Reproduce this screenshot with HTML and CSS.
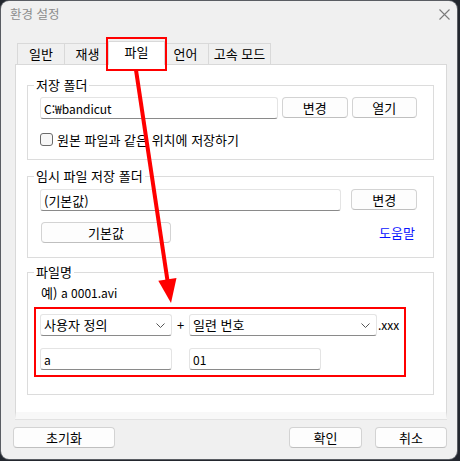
FILE: index.html
```html
<!DOCTYPE html>
<html lang="ko">
<head>
    <meta charset="UTF-8">
    <title>환경 설정</title>
    <link rel="stylesheet" href="styles.css">
</head>
<body>
    <div class="window">
        <div class="titlebar">
            <span class="title">환경 설정</span>
            <svg class="close" width="11" height="11" viewBox="0 0 11 11">
                <path d="M0.5 0.5 L10.5 10.5 M10.5 0.5 L0.5 10.5" stroke="#7a7a7a" stroke-width="1.1" fill="none"/>
            </svg>
        </div>

        <div class="tabs">
            <div class="tab tab-general">일반</div>
            <div class="tab tab-play">재생</div>
            <div class="tab tab-file active">파일</div>
            <div class="tab tab-lang">언어</div>
            <div class="tab tab-fast">고속 모드</div>
        </div>

        <div class="page">
            <fieldset class="group group-save">
                <legend>저장 폴더</legend>
                <div class="row">
                    <input class="field field-path latin" type="text" value="C:₩bandicut">
                    <button class="btn btn-small">변경</button>
                    <button class="btn btn-small">열기</button>
                </div>
                <label class="check-row">
                    <span class="checkbox"></span>
                    원본 파일과 같은 위치에 저장하기
                </label>
            </fieldset>

            <fieldset class="group group-temp">
                <legend>임시 파일 저장 폴더</legend>
                <div class="row row-wide">
                    <input class="field field-temp" type="text" value="(기본값)">
                    <button class="btn btn-small">변경</button>
                </div>
                <div class="row row-default">
                    <button class="btn btn-default">기본값</button>
                    <a class="help-link" href="#">도움말</a>
                </div>
            </fieldset>

            <fieldset class="group group-name">
                <legend>파일명</legend>
                <div class="example">예) <span class="latin">a 0001.avi</span></div>
                <div class="highlight-box">
                    <div class="row">
                        <div class="select select-short">
                            <span>사용자 정의</span>
                            <svg width="9" height="5" viewBox="0 0 9 5"><polyline points="0.5,0.5 4.5,4.5 8.5,0.5" fill="none" stroke="#555" stroke-width="1"/></svg>
                        </div>
                        <span class="plus">+</span>
                        <div class="select select-long">
                            <span>일련 번호</span>
                            <svg width="9" height="5" viewBox="0 0 9 5"><polyline points="0.5,0.5 4.5,4.5 8.5,0.5" fill="none" stroke="#555" stroke-width="1"/></svg>
                        </div>
                        <span class="ext latin">.xxx</span>
                    </div>
                    <div class="row row-inputs">
                        <input class="field field-short latin" type="text" value="a">
                        <span class="plus"></span>
                        <input class="field field-short latin" type="text" value="01">
                    </div>
                </div>
            </fieldset>
        </div>

        <div class="footer">
            <button class="btn btn-reset">초기화</button>
            <button class="btn btn-ok">확인</button>
            <button class="btn btn-cancel">취소</button>
        </div>
    </div>

    <!-- red annotation drawn over the dialog -->
    <svg class="annotation" width="460" height="461" viewBox="0 0 460 461">
        <rect x="107" y="38" width="59" height="32" fill="none" stroke="#ff0000" stroke-width="2"/>
        <line x1="136" y1="70" x2="167.4" y2="280" stroke="#ff0000" stroke-width="4"/>
        <polygon points="171,303 176.5,278 158.3,280.7" fill="#ff0000"/>
    </svg>
</body>
</html>
```

FILE: styles.css
```css
body {
    margin: 0;
    width: 460px;
    height: 461px;
    overflow: hidden;
    position: relative;
    background-color: #23272e;
    font-family: "Noto Sans CJK KR", "Noto Sans", sans-serif;
    font-size: 13px;
    color: #000;
}

.latin {
    font-size: 12px;
}

.window {
    width: 456px;
    height: 458px;
    margin: 1px 0 0 1px;
    background-color: #f0f0f0;
    border-radius: 8px;
    box-shadow: 0 0 0 1px #5a5d63;
    display: flex;
    flex-direction: column;
}

.titlebar {
    height: 26px;
    display: flex;
    align-items: center;
    justify-content: space-between;
    padding: 0 7px 0 9px;
}

.title {
    color: #8c8c8c;
    font-size: 12.5px;
    line-height: 16px;
}

.close {
    display: block;
}

/* tabs */
.tabs {
    display: flex;
    align-items: flex-end;
    height: 23px;
    margin: 14px 0 0 16px;
}

.tab {
    box-sizing: border-box;
    height: 21px;
    border: 1px solid #d9d9d9;
    border-bottom: 0;
    background-color: #f0f0f0;
    text-align: center;
    line-height: 19px;
    margin-right: -1px;
}

.tab-general { width: 48px; }
.tab-play { width: 47px; }
.tab-file { width: 53px; }
.tab-lang { width: 47px; }
.tab-fast { width: 63px; }

.tab.active {
    width: 57px;
    height: 24px;
    margin: 0 -3px -1px -2px;
    background-color: #fff;
    position: relative;
    z-index: 1;
    line-height: 20px;
}

.page {
    box-sizing: border-box;
    width: 432px;
    height: 355px;
    margin-left: 14px;
    padding: 12px 12px 0 11px;
    background-color: #fff;
    border: 1px solid #d9d9d9;
    border-bottom: 7px solid #f8f8f8;
    box-shadow: 0 1px 0 #e2e2e2;
}

/* group boxes */
.group {
    margin: 0;
    min-width: 0;
    border: 1px solid #dcdcdc;
    padding: 4px 13px 12px 12px;
}

.group legend {
    padding: 0 2px;
    margin-left: -6px;
    line-height: 16px;
}

.group-temp {
    margin-top: 8px;
    padding-top: 5px;
    padding-bottom: 14px;
}

.group-name {
    margin-top: 6px;
    padding-top: 5px;
    padding-bottom: 17px;
}

.row {
    display: flex;
    align-items: flex-start;
    height: 22px;
}

.row-default {
    margin-top: 10px;
    align-items: center;
    justify-content: space-between;
    padding-right: 5px;
}

.row-inputs {
    margin-top: 12px;
}

/* inputs */
.field,
.select {
    box-sizing: border-box;
    height: 22px;
    margin: 0;
    padding: 0 3px;
    background-color: #fff;
    border: 1px solid #e4e4e4;
    border-bottom-color: #8a8a8a;
    border-radius: 3px;
    font-family: inherit;
    font-size: 13px;
    color: #000;
    outline: none;
}

.field.latin {
    font-size: 12px;
}

.field-path { width: 240px; margin-right: 3px; }
.field-temp { width: 303px; margin-right: 9px; }
.field-short { width: 132px; }

.select {
    display: flex;
    align-items: center;
    justify-content: space-between;
    padding-right: 6px;
    line-height: 20px;
}

.select svg {
    display: block;
}

.select-short { width: 132px; }
.select-long { width: 188px; }

.plus {
    width: 17px;
    text-align: center;
    line-height: 22px;
}

.ext {
    line-height: 22px;
    padding-left: 1px;
}

/* buttons */
.btn {
    box-sizing: border-box;
    height: 21px;
    padding: 0;
    background-color: #fdfdfd;
    border: 1px solid #d3d3d3;
    border-bottom-color: #bfbfbf;
    border-radius: 4px;
    font-family: inherit;
    font-size: 13px;
    line-height: 19px;
    color: #000;
}

.btn-small {
    width: 66px;
    margin-left: 1px;
    margin-right: 3px;
}

.btn-default {
    width: 130px;
    margin-left: 1px;
}

.help-link {
    color: #0a14ff;
    text-decoration: none;
    line-height: 16px;
    margin-top: 2px;
}

/* checkbox */
.check-row {
    display: flex;
    align-items: center;
    height: 16px;
    margin-top: 12px;
    gap: 4px;
}

.checkbox {
    box-sizing: border-box;
    width: 13px;
    height: 13px;
    border: 1px solid #6b6b6b;
    border-radius: 3px;
    background-color: #f7f7f7;
}

.example {
    line-height: 16px;
    padding-left: 1px;
}

.highlight-box {
    box-sizing: border-box;
    width: 372px;
    margin: 6px 0 0 -6px;
    padding: 5px 4px 5px 4px;
    border: 2px solid #ff0000;
}

/* bottom buttons */
.footer {
    display: flex;
    margin-top: 8px;
    padding: 0 10px 0 12px;
}

.btn-reset { width: 102px; }
.btn-ok { width: 73px; margin-left: auto; margin-right: 13px; }
.btn-cancel { width: 72px; }

.annotation {
    position: absolute;
    left: 0;
    top: 0;
    pointer-events: none;
}
```
